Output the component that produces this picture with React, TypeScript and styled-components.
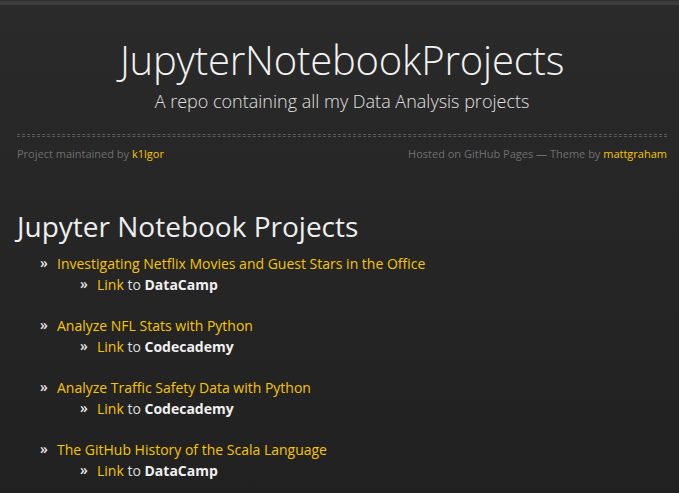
import React from "react";
import styled, { createGlobalStyle } from "styled-components";

const Global = createGlobalStyle`
  html, body { margin: 0; padding: 0; }
  body {
    background: linear-gradient(#2a2a2a, #212121 493px);
    background-color: #212121;
    min-height: 493px;
    font-family: "Open Sans", "Liberation Sans", sans-serif;
    color: #dcdcdc;
  }
`;

const TopBar = styled.div`
  height: 4px;
  background: #3d3d3d;
  border-top: 1px solid #2e2e2e;
`;

const Wrapper = styled.div`
  width: 650px;
  margin-left: 17px;
`;

const Header = styled.header`
  text-align: center;
  padding-top: 29px;
  padding-bottom: 21px;
`;

const Title = styled.h1`
  margin: 0;
  font-weight: 300;
  font-size: 40px;
  line-height: 52px;
  color: #f2f2f2;
  letter-spacing: -0.2px;
`;

const Subtitle = styled.h2`
  margin: 3px 0 0;
  font-weight: 300;
  font-size: 18px;
  line-height: 24px;
  color: #e0e0e0;
`;

const Rule = styled.div`
  height: 1px;
  border-top: 1px dashed #5a5a5a;
  border-bottom: 1px dashed #5a5a5a;
`;

const Meta = styled.div`
  display: flex;
  justify-content: space-between;
  font-size: 11px;
  line-height: 16px;
  color: #6f6f6f;
  margin-top: 9px;
`;

const Yellow = styled.a`
  color: #f7c600;
  text-decoration: none;
`;

const Heading = styled.h1`
  margin: 46px 0 0;
  font-weight: 400;
  font-size: 28px;
  line-height: 36px;
  color: #eeeeee;
`;

const List = styled.ul<{ $nested?: boolean }>`
  list-style: none;
  margin: ${(p) => (p.$nested ? "0" : "9px 0 0")};
  padding-left: 23px;
`;

const Item = styled.li<{ $nested?: boolean }>`
  position: relative;
  padding-left: 17px;
  font-size: 14px;
  line-height: 21px;
  margin-bottom: ${(p) => (p.$nested ? "0" : "20px")};
  &::before {
    content: "»";
    position: absolute;
    left: 0;
    top: -1px;
    font-weight: 600;
    color: #e8e8e8;
    font-size: 14px;
  }
`;

const To = styled.span`
  color: #dddddd;
`;

const Site = styled.strong`
  color: #f0f0f0;
  font-weight: 700;
`;

const projects = [
  { title: "Investigating Netflix Movies and Guest Stars in the Office", site: "DataCamp" },
  { title: "Analyze NFL Stats with Python", site: "Codecademy" },
  { title: "Analyze Traffic Safety Data with Python", site: "Codecademy" },
  { title: "The GitHub History of the Scala Language", site: "DataCamp" },
];

export default function App() {
  return (
    <>
      <Global />
      <TopBar />
      <Wrapper>
        <Header>
          <Title>JupyterNotebookProjects</Title>
          <Subtitle>A repo containing all my Data Analysis projects</Subtitle>
        </Header>
        <Rule />
        <Meta>
          <span>
            Project maintained by <Yellow href="#">k1lgor</Yellow>
          </span>
          <span>
            Hosted on GitHub Pages — Theme by <Yellow href="#">mattgraham</Yellow>
          </span>
        </Meta>
        <Heading>Jupyter Notebook Projects</Heading>
        <List>
          {projects.map((p) => (
            <Item key={p.title}>
              <Yellow href="#">{p.title}</Yellow>
              <List $nested>
                <Item $nested>
                  <Yellow href="#">Link</Yellow> <To>to</To> <Site>{p.site}</Site>
                </Item>
              </List>
            </Item>
          ))}
        </List>
      </Wrapper>
    </>
  );
}
